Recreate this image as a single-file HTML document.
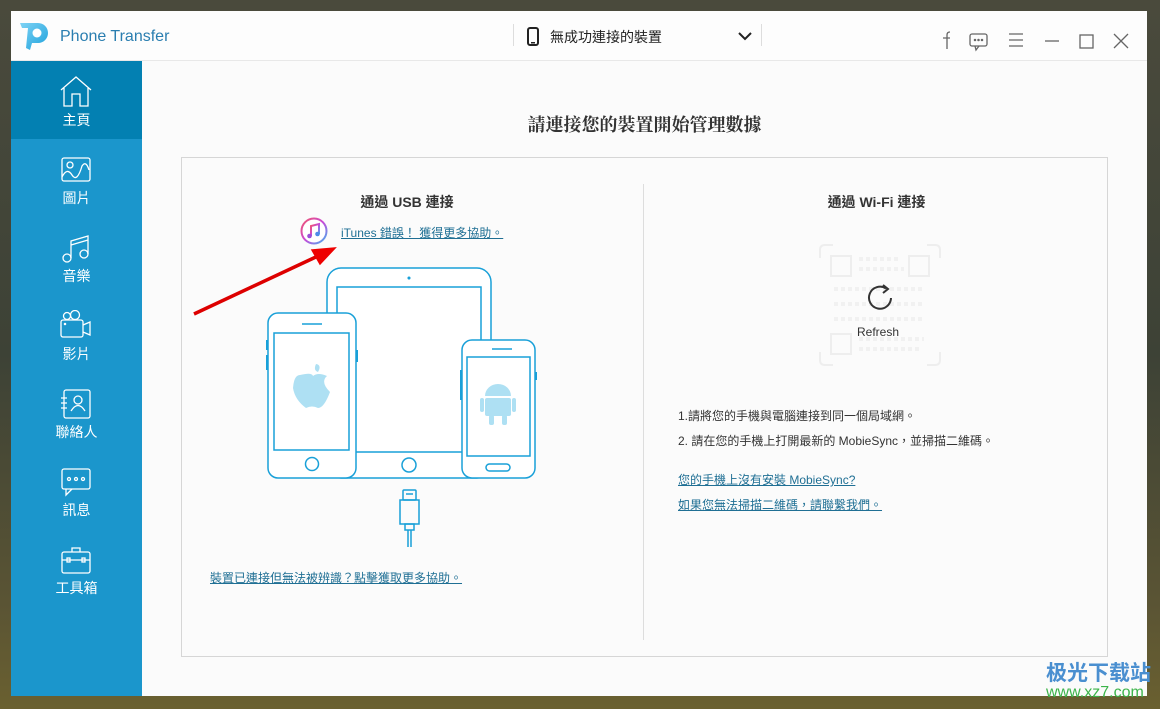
<!DOCTYPE html>
<html><head><meta charset="utf-8"><style>
*{margin:0;padding:0;box-sizing:border-box}
body{width:1160px;height:709px;overflow:hidden;background:linear-gradient(180deg,#4a4a3c 0%,#3d4236 50%,#5a5434 85%,#6a6030 100%);font-family:"Liberation Sans","Noto Sans CJK TC",sans-serif;position:relative}
.win{position:absolute;left:11px;top:11px;width:1136px;height:685px;background:#fbfbfb}
.title{position:absolute;left:0;top:0;width:1136px;height:50px;background:#fdfdfd;border-bottom:1px solid #e8e8e8}
.side{position:absolute;left:0;top:50px;width:131px;height:635px;background:#1b96cc}
.item{position:absolute;left:0;width:131px;height:78px;color:#fff;text-align:center;font-size:14px}
.item svg{position:absolute;left:49px;top:15px}
.item span{position:absolute;left:0;right:0;top:49px}
.panel{position:absolute;left:170px;top:146px;width:927px;height:500px;border:1px solid #d6d6d6;background:#fbfbfb}
a{color:#1f6f94;text-decoration:underline;font-size:12px}
.t{position:absolute;font-size:12px;color:#333}
</style></head><body>
<div class="win">
<div class="title">
<svg style="position:absolute;left:7px;top:9px" width="32" height="32" viewBox="0 0 32 32"><defs><linearGradient id="g" x1="0" y1="0" x2="1" y2="1"><stop offset="0" stop-color="#7fd3f5"/><stop offset="1" stop-color="#1ea2dc"/></linearGradient></defs><path d="M2 3 H20 A10 10 0 0 1 20 23 H14 L12 30 L8 28 L10 8 H4 Z" fill="url(#g)"/><circle cx="19" cy="13" r="4.5" fill="#fff"/></svg>
<div style="position:absolute;left:49px;top:17px;font-size:16px;color:#2a7eb0">Phone Transfer</div>
<div style="position:absolute;left:502px;top:13px;width:1px;height:22px;background:#ddd"></div>
<svg style="position:absolute;left:516px;top:16px" width="12" height="19" viewBox="0 0 12 19"><rect x="1" y="1" width="10" height="17" rx="2" fill="none" stroke="#222" stroke-width="2"/><rect x="4" y="15" width="4" height="1.5" fill="#222"/></svg>
<div style="position:absolute;left:539px;top:16px;font-size:14px;color:#222">無成功連接的裝置</div>
<svg style="position:absolute;left:727px;top:21px" width="14" height="9"><path d="M1 1 L7 7 L13 1" fill="none" stroke="#222" stroke-width="2"/></svg>
<div style="position:absolute;left:750px;top:13px;width:1px;height:22px;background:#ddd"></div>
<svg style="position:absolute;left:920px;top:18px" width="200" height="24" viewBox="0 0 200 24" fill="none" stroke="#666" stroke-width="1.3">
<path d="M16 20 V6 Q16 3 19 3 M12 9 H19"/>
<rect x="39" y="5" width="17" height="12" rx="2"/><path d="M44 17 L45 21 L48 17"/><circle cx="44" cy="11" r=".6" fill="#666"/><circle cx="47.5" cy="11" r=".6" fill="#666"/><circle cx="51" cy="11" r=".6" fill="#666"/>
<path d="M78 5 H92 M78 11 H92 M78 17 H92"/>
<path d="M114 12 H128"/>
<rect x="149" y="6" width="13" height="13"/>
<path d="M183 5 L197 19 M197 5 L183 19"/>
</svg>
</div>
<div class="side">
<div class="item" style="top:0;background:#0380b2"><svg width="32" height="32" viewBox="0 0 32 32" fill="none" stroke="#fff" stroke-width="1.3"><path d="M1 14 L16 1 L31 14 M4 12 V30 H12 V18 H20 V30 H28 V12"/></svg><span>主頁</span></div>
<div class="item" style="top:78px"><svg width="32" height="32" viewBox="0 0 32 32" fill="none" stroke="#fff" stroke-width="1.3"><rect x="2" y="4" width="28" height="23" rx="2"/><circle cx="10" cy="11" r="3"/><path d="M2 23 Q7 13 12 21 T22 12 Q26 6 29 16"/></svg><span>圖片</span></div>
<div class="item" style="top:156px"><svg width="32" height="32" viewBox="0 0 32 32" fill="none" stroke="#fff" stroke-width="1.3"><circle cx="7" cy="26" r="4"/><circle cx="24" cy="22" r="4"/><path d="M11 26 V9 L28 4 V22 M11 13 L28 8"/></svg><span>音樂</span></div>
<div class="item" style="top:234px"><svg width="32" height="32" viewBox="0 0 32 32" fill="none" stroke="#fff" stroke-width="1.3"><circle cx="7" cy="6" r="3.5"/><circle cx="15" cy="5" r="4.5"/><rect x="1" y="10" width="22" height="17" rx="2"/><path d="M23 15 L30 12 V25 L23 22"/><circle cx="5" cy="14" r=".6" fill="#fff"/></svg><span>影片</span></div>
<div class="item" style="top:312px"><svg width="32" height="32" viewBox="0 0 32 32" fill="none" stroke="#fff" stroke-width="1.3"><rect x="4" y="2" width="26" height="28" rx="2"/><circle cx="18" cy="12" r="4"/><path d="M11 23 Q18 12 25 23 M1 10 H7 M1 15 H7 M1 20 H7"/></svg><span>聯絡人</span></div>
<div class="item" style="top:390px"><svg width="32" height="32" viewBox="0 0 32 32" fill="none" stroke="#fff" stroke-width="1.3"><rect x="2" y="3" width="28" height="20" rx="2"/><path d="M6 23 V29 L12 23"/><circle cx="9" cy="13" r="1.5"/><circle cx="16" cy="13" r="1.5"/><circle cx="23" cy="13" r="1.5"/></svg><span>訊息</span></div>
<div class="item" style="top:468px"><svg width="32" height="32" viewBox="0 0 32 32" fill="none" stroke="#fff" stroke-width="1.3"><rect x="2" y="8" width="28" height="21" rx="2"/><path d="M12 8 V4 H20 V8 M2 16 H30"/><rect x="7" y="14" width="3" height="4"/><rect x="22" y="14" width="3" height="4"/></svg><span>工具箱</span></div>
</div>
<div style="position:absolute;left:131px;right:0;top:100px;text-align:center;font-size:18px;color:#333;font-family:'Noto Serif CJK SC','Liberation Serif',serif;font-weight:bold">請連接您的裝置開始管理數據</div>
<div class="panel">
<div style="position:absolute;left:461px;top:26px;width:1px;height:456px;background:#ddd"></div>
<div style="position:absolute;left:0;width:450px;top:34px;text-align:center;font-size:14px;font-weight:bold;color:#333">通過 USB 連接</div>
<div style="position:absolute;left:462px;width:465px;top:34px;text-align:center;font-size:14px;font-weight:bold;color:#333">通過 Wi-Fi 連接</div>
<svg style="position:absolute;left:118px;top:59px" width="28" height="28" viewBox="0 0 28 28"><defs><linearGradient id="it" x1="0" y1="0" x2="1" y2="1"><stop offset="0" stop-color="#f2556c"/><stop offset=".5" stop-color="#c84ad8"/><stop offset="1" stop-color="#3fb4f0"/></linearGradient></defs><circle cx="14" cy="14" r="12.5" fill="#fff" stroke="url(#it)" stroke-width="2"/><path d="M11 19 V9 L19 7 V17" fill="none" stroke="url(#it)" stroke-width="2"/><circle cx="9.5" cy="19" r="2.3" fill="#9b4fd8"/><circle cx="17.5" cy="17" r="2.3" fill="#4d8be8"/></svg>
<a style="position:absolute;left:159px;top:66px">iTunes 錯誤！ 獲得更多協助。</a>
<a style="position:absolute;left:28px;top:411px">裝置已連接但無法被辨識？點擊獲取更多協助。</a>
<svg style="position:absolute;left:-182px;top:-158px" width="560" height="560" viewBox="0 0 560 560" fill="none" stroke="#19a0d8" stroke-width="1.5">
<path d="M194 314 L318 256" stroke="#d00" stroke-width="3.5"/><path d="M335 248 L312 250 L320 264 Z" fill="#e00" stroke="#e00"/>
<rect x="327" y="268" width="164" height="210" rx="14" fill="#fff"/>
<rect x="337" y="287" width="144" height="165"/>
<circle cx="409" cy="278" r=".8" fill="#19a0d8"/>
<circle cx="409" cy="465" r="7"/>
<rect x="268" y="313" width="88" height="165" rx="10" fill="#fff"/>
<rect x="274" y="333" width="75" height="117"/>
<path d="M302 324 H322"/><circle cx="312" cy="464" r="6.5"/>
<path d="M267 340 V350 M267 355 V370 M357 350 V362" stroke-width="2"/>
<rect x="462" y="340" width="73" height="138" rx="10" fill="#fff"/>
<rect x="467" y="357" width="63" height="99"/>
<path d="M492 349 H512"/><rect x="486" y="464" width="24" height="7" rx="3.5"/>
<path d="M461 370 V400 M536 372 V380" stroke-width="2"/>
<path d="M316 364 Q322 365 318 372 Q313 370 316 364 Z M300 375 Q312 372 313 376 Q318 372 327 376 Q320 382 330 392 Q324 408 318 408 Q312 405 306 408 Q295 400 293 388 Q294 375 300 375 Z" fill="#aee0f3" stroke="none"/>
<g fill="#aee0f3" stroke="none"><path d="M485 396 A13 12 0 0 1 511 396 Z"/><rect x="485" y="398" width="26" height="18" rx="2"/><rect x="480" y="398" width="4" height="14" rx="2"/><rect x="512" y="398" width="4" height="14" rx="2"/><rect x="489" y="415" width="5" height="10" rx="2"/><rect x="502" y="415" width="5" height="10" rx="2"/></g>
<rect x="403" y="490" width="13" height="10" rx="1"/><rect x="400" y="500" width="19" height="24"/><rect x="405" y="524" width="9" height="6"/><path d="M408 530 V547 M411 530 V547"/><path d="M406 494 H413"/>
</svg>
<svg style="position:absolute;left:637px;top:86px" width="122" height="122" viewBox="0 0 122 122" fill="none" stroke="#eee" stroke-width="2"><path d="M1 14 V6 Q1 1 6 1 H14 M108 1 H116 Q121 1 121 6 V14 M121 108 V116 Q121 121 116 121 H108 M14 121 H6 Q1 121 1 116 V108"/><rect x="12" y="12" width="20" height="20"/><rect x="90" y="12" width="20" height="20"/><rect x="12" y="90" width="20" height="20"/><path d="M40 15 H80 M40 25 H85 M15 45 H105 M15 60 H105 M15 75 H105 M40 95 H105 M40 105 H100" stroke-dasharray="4 3" stroke-width="4" stroke="#f1f1f1"/></svg>
<svg style="position:absolute;left:682px;top:124px" width="32" height="32" viewBox="0 0 32 32" fill="none" stroke="#333" stroke-width="2"><path d="M27 16 A11 11 0 1 1 22 6.5"/><path d="M19 3 L24 7 L19 11" /></svg>
<div style="position:absolute;left:675px;top:167px;font-size:12px;color:#333">Refresh</div>
<div class="t" style="left:496px;top:249px">1.請將您的手機與電腦連接到同一個局域網。</div>
<div class="t" style="left:496px;top:274px">2. 請在您的手機上打開最新的 MobieSync，並掃描二維碼。</div>
<a style="position:absolute;left:496px;top:313px">您的手機上沒有安裝 MobieSync?</a>
<a style="position:absolute;left:496px;top:338px">如果您無法掃描二維碼，請聯繫我們。</a>
</div>
</div>
<div style="position:absolute;left:1046px;top:657px;font-size:21px;font-weight:bold;color:#4a8fd0">极光下载站</div>
<div style="position:absolute;left:1046px;top:684px;font-size:16px;color:#3cb44a">www.xz7.com</div>
</body></html>
